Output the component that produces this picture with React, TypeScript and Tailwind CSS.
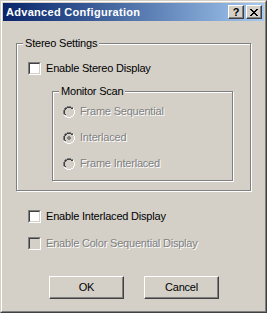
import React from "react";

const FONT = { fontFamily: '"Liberation Sans", Arial, sans-serif' };

function Check({ disabled }: { disabled?: boolean }) {
  return (
    <div className="w-[13px] h-[13px] shrink-0 border border-t-[#808080] border-l-[#808080] border-b-white border-r-white">
      <div
        className={
          "w-full h-full border border-t-[#404040] border-l-[#404040] border-b-[#d4d0c8] border-r-[#d4d0c8] " +
          (disabled ? "bg-[#d4d0c8]" : "bg-white")
        }
      />
    </div>
  );
}

const RADIO_MAP = [
  "....GGGG....",
  "..GGDDDDGG..",
  ".GDD....DDW.",
  ".GD......LW.",
  "GD........LW",
  "GD........LW",
  "GD........LW",
  "GD........LW",
  ".GD......LW.",
  ".WLL....LLW.",
  "..WWLLLLWW..",
  "....WWWW....",
];

function Radio({ checked, disabled }: { checked?: boolean; disabled?: boolean }) {
  const colors: Record<string, string> = {
    G: "#808080",
    D: "#404040",
    W: "#ffffff",
    L: "#d4d0c8",
  };
  const rects: React.ReactNode[] = [];
  RADIO_MAP.forEach((row, y) => {
    const inside = row.replace(/^\.+|\.+$/g, "");
    const start = row.indexOf(inside);
    row.split("").forEach((c, x) => {
      let fill: string | null = null;
      if (c !== ".") fill = colors[c];
      else if (x > start && x < start + inside.length) fill = disabled ? "#d4d0c8" : "#ffffff";
      if (fill) rects.push(<rect key={`${x}-${y}`} x={x} y={y} width={1} height={1} fill={fill} />);
    });
  });
  const dot = disabled ? "#808080" : "#000000";
  return (
    <svg width="12" height="12" viewBox="0 0 12 12" shapeRendering="crispEdges" className="shrink-0">
      {rects}
      {checked && (
        <g fill={dot}>
          <rect x={5} y={4} width={2} height={1} />
          <rect x={4} y={5} width={4} height={2} />
          <rect x={5} y={7} width={2} height={1} />
        </g>
      )}
    </svg>
  );
}

function DisabledText({ children }: { children: React.ReactNode }) {
  return <span className="text-[#808080] [text-shadow:1px_1px_0_#ffffff]">{children}</span>;
}

function TitleButton({ children }: { children: React.ReactNode }) {
  return (
    <div className="w-[16px] h-[14px] bg-[#d4d0c8] border border-t-white border-l-white border-b-[#404040] border-r-[#404040] shadow-[inset_-1px_-1px_0_#808080] flex items-center justify-center">
      {children}
    </div>
  );
}

function PushButton({ children }: { children: React.ReactNode }) {
  return (
    <div className="w-[75px] h-[23px] bg-[#d4d0c8] border border-t-white border-l-white border-b-[#404040] border-r-[#404040] shadow-[inset_-1px_-1px_0_#808080] flex items-center justify-center text-black">
      {children}
    </div>
  );
}

export default function App() {
  return (
    <div style={FONT} className="w-[267px] h-[313px] text-[11px] leading-[13px] tracking-[-0.2px] text-black select-none">
      <div className="w-full h-full border border-t-[#d4d0c8] border-l-[#d4d0c8] border-b-[#404040] border-r-[#404040]">
        <div className="w-full h-full border border-t-white border-l-white border-b-[#808080] border-r-[#808080] bg-[#d4d0c8] p-[1px] flex flex-col">
          {/* Title bar */}
          <div className="h-[18px] shrink-0 flex items-center bg-gradient-to-r from-[#0a246a] to-[#a6caf0] pl-[3px] pr-[2px]">
            <span className="text-white font-bold text-[11px] leading-[18px] tracking-[0.3px] flex-1">Advanced Configuration</span>
            <div className="flex gap-[2px]">
              <TitleButton>
                <span className="font-bold text-[11px] leading-[11px] tracking-normal text-black">?</span>
              </TitleButton>
              <TitleButton>
                <svg width="8" height="7" viewBox="0 0 8 7" shapeRendering="crispEdges">
                  <g fill="#000">
                    <rect x="0" y="0" width="2" height="1" />
                    <rect x="6" y="0" width="2" height="1" />
                    <rect x="1" y="1" width="2" height="1" />
                    <rect x="5" y="1" width="2" height="1" />
                    <rect x="2" y="2" width="4" height="1" />
                    <rect x="3" y="3" width="2" height="1" />
                    <rect x="2" y="4" width="4" height="1" />
                    <rect x="1" y="5" width="2" height="1" />
                    <rect x="5" y="5" width="2" height="1" />
                    <rect x="0" y="6" width="2" height="1" />
                    <rect x="6" y="6" width="2" height="1" />
                  </g>
                </svg>
              </TitleButton>
            </div>
          </div>

          {/* Stereo Settings group */}
          <div className="mt-[22px] ml-[13px] w-[235px] h-[148px] border border-[#808080] shadow-[inset_1px_1px_0_#ffffff,1px_1px_0_#ffffff] flex flex-col">
            <span className="-mt-[7px] ml-[6px] px-[2px] self-start h-[13px] bg-[#d4d0c8]">Stereo Settings</span>
            <div className="mt-[12px] ml-[11px] h-[13px] flex items-center gap-[5px]">
              <Check />
              <span>Enable Stereo Display</span>
            </div>

            {/* Monitor Scan group */}
            <div className="mt-[16px] ml-[35px] w-[181px] h-[90px] border border-[#808080] shadow-[inset_1px_1px_0_#ffffff,1px_1px_0_#ffffff] flex flex-col">
              <span className="-mt-[7px] ml-[6px] px-[2px] self-start h-[13px] bg-[#d4d0c8]">Monitor Scan</span>
              <div className="mt-[7px] ml-[10px] flex flex-col gap-[13px]">
                <div className="h-[13px] flex items-center gap-[5px]">
                  <Radio disabled />
                  <DisabledText>Frame Sequential</DisabledText>
                </div>
                <div className="h-[13px] flex items-center gap-[5px]">
                  <Radio disabled checked />
                  <DisabledText>Interlaced</DisabledText>
                </div>
                <div className="h-[13px] flex items-center gap-[5px]">
                  <Radio disabled />
                  <DisabledText>Frame Interlaced</DisabledText>
                </div>
              </div>
            </div>
          </div>

          <div className="mt-[19px] ml-[25px] h-[13px] flex items-center gap-[5px]">
            <Check />
            <span>Enable Interlaced Display</span>
          </div>
          <div className="mt-[14px] ml-[25px] h-[13px] flex items-center gap-[5px]">
            <Check disabled />
            <DisabledText>Enable Color Sequential Display</DisabledText>
          </div>

          <div className="mt-[26px] ml-[46px] flex gap-[20px]">
            <PushButton>OK</PushButton>
            <PushButton>Cancel</PushButton>
          </div>
        </div>
      </div>
    </div>
  );
}
